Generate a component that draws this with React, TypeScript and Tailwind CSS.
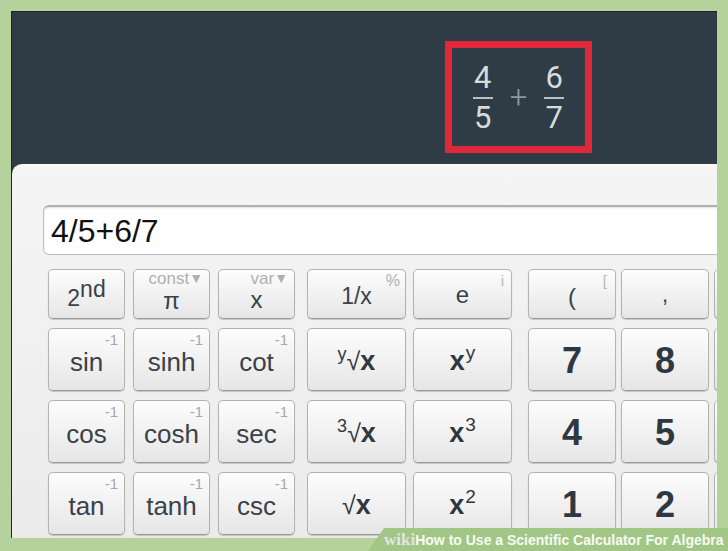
import React from "react";

const btnBase =
  "relative flex items-center justify-center rounded-[5px] border border-[#b3b3b3] border-b-[#9a9a9a] bg-gradient-to-b from-[#fdfdfd] to-[#e6e6e6] shadow-[0_1px_1px_rgba(0,0,0,0.18)] overflow-hidden";

function Sup({ children }: { children: React.ReactNode }) {
  return (
    <span className="absolute right-[6px] top-[3px] text-[15px] leading-[16px] text-[#a9a9a9]">
      {children}
    </span>
  );
}

function Fn({ label }: { label: string }) {
  return (
    <div className={btnBase}>
      <span className="text-[26px] leading-none text-[#3a4148] mt-[4px]">{label}</span>
      <Sup>-1</Sup>
    </div>
  );
}

function Digit({ d }: { d: string }) {
  return (
    <div className={btnBase}>
      <span className="text-[36px] font-bold leading-none text-[#2d3842] mt-[2px]">{d}</span>
    </div>
  );
}

function Blank() {
  return <div className={btnBase} />;
}

function Frac({ a, b }: { a: string; b: string }) {
  return (
    <div className="flex flex-col items-center">
      <span className="text-[31px] leading-[30px] text-[#d6dbde]">{a}</span>
      <span className="block w-[20px] h-[2px] bg-[#b9c0c5] my-[4px]" />
      <span className="text-[31px] leading-[30px] text-[#d6dbde]">{b}</span>
    </div>
  );
}

export default function App() {
  return (
    <div
      className="relative w-[728px] h-[551px] bg-[#b5d19c] pl-[11px] pr-[11px] pt-[11px] pb-[13px] overflow-hidden"
      style={{ fontFamily: '"Liberation Sans", Arial, sans-serif' }}
    >
      <div className="w-full h-full flex flex-col bg-[#2f3b45] border-t border-l border-[#1e272e] overflow-hidden">
        {/* dark top */}
        <div className="h-[152px] shrink-0 flex justify-end items-start pt-[29px] pr-[125px]">
          <div
            className="w-[147px] h-[112px] border-[7px] border-[#e0283a] flex items-center justify-center gap-[17px] pt-[2px]"
            style={{ fontFamily: 'Roboto, "Liberation Sans", sans-serif' }}
          >
            <Frac a="4" b="5" />
            <span className="text-[31px] font-light leading-none text-[#8e979d] mb-[2px]">+</span>
            <Frac a="6" b="7" />
          </div>
        </div>

        {/* light calculator panel */}
        <div className="flex-1 rounded-tl-[10px] bg-gradient-to-b from-[#f5f5f5] to-[#ebebeb] border-t border-[#fafafa] pt-[40px] pl-[31px] overflow-hidden">
          <div className="h-[50px] w-[700px] rounded-[6px] border border-[#bdbdbd] border-t-[2px] border-t-[#b0b0b0] bg-white shadow-[inset_0_1px_2px_rgba(0,0,0,0.12)] flex items-center pl-[7px]">
            <span className="text-[32px] leading-none text-[#111111]">4/5+6/7</span>
          </div>

          <div className="mt-[14px] ml-[5px] flex">
            {/* group 1 */}
            <div className="grid grid-cols-[77px_77px_77px] grid-rows-[50px_63px_63px_63px] gap-x-[8px] gap-y-[9px] shrink-0">
              <div className={btnBase}>
                <span className="text-[23px] leading-none text-[#3a4148] mt-[8px]">
                  2<span className="relative -top-[9px]">nd</span>
                </span>
              </div>
              <div className={btnBase}>
                <span className="text-[24px] leading-[20px] text-[#3a4148] mt-[14px]">π</span>
                <span className="absolute right-[6px] top-[1px] text-[17px] leading-[15px] text-[#b0b0b0]">
                  const<span className="text-[14px] relative -top-[1px]">▼</span>
                </span>
              </div>
              <div className={btnBase}>
                <span className="text-[24px] leading-[20px] text-[#3a4148] mt-[12px]">x</span>
                <span className="absolute right-[6px] top-[1px] text-[17px] leading-[15px] text-[#b0b0b0]">
                  var<span className="text-[14px] relative -top-[1px]">▼</span>
                </span>
              </div>

              <Fn label="sin" />
              <Fn label="sinh" />
              <Fn label="cot" />
              <Fn label="cos" />
              <Fn label="cosh" />
              <Fn label="sec" />
              <Fn label="tan" />
              <Fn label="tanh" />
              <Fn label="csc" />
            </div>

            {/* group 2 */}
            <div className="ml-[12px] grid grid-cols-[99px_99px] grid-rows-[50px_63px_63px_63px] gap-x-[7px] gap-y-[9px] shrink-0">
              <div className={btnBase}>
                <span className="text-[23px] leading-none text-[#3a4148] mt-[4px]">1/x</span>
                <span className="absolute right-[5px] top-[3px] text-[16px] leading-[16px] text-[#b0b0b0]">%</span>
              </div>
              <div className={btnBase}>
                <span className="text-[24px] leading-none text-[#3a4148] mt-[2px]">e</span>
                <span className="absolute right-[7px] top-[3px] text-[15px] leading-[16px] text-[#b8b8b8]">i</span>
              </div>

              <div className={btnBase}>
                <span className="flex items-baseline leading-none text-[#30383f] mt-[4px]">
                  <span className="text-[18px] relative -top-[10px]">y</span>
                  <span className="text-[25px]">√</span>
                  <span className="text-[27px] font-bold">x</span>
                </span>
              </div>
              <div className={btnBase}>
                <span className="flex items-baseline leading-none text-[#30383f] mt-[4px]">
                  <span className="text-[27px] font-bold">x</span>
                  <span className="text-[19px] relative -top-[11px] ml-[1px]">y</span>
                </span>
              </div>

              <div className={btnBase}>
                <span className="flex items-baseline leading-none text-[#30383f] mt-[4px]">
                  <span className="text-[18px] relative -top-[10px]">3</span>
                  <span className="text-[25px]">√</span>
                  <span className="text-[27px] font-bold">x</span>
                </span>
              </div>
              <div className={btnBase}>
                <span className="flex items-baseline leading-none text-[#30383f] mt-[4px]">
                  <span className="text-[27px] font-bold">x</span>
                  <span className="text-[19px] relative -top-[11px] ml-[1px]">3</span>
                </span>
              </div>

              <div className={btnBase}>
                <span className="flex items-baseline leading-none text-[#30383f] mt-[4px]">
                  <span className="text-[25px]">√</span>
                  <span className="text-[27px] font-bold">x</span>
                </span>
              </div>
              <div className={btnBase}>
                <span className="flex items-baseline leading-none text-[#30383f] mt-[4px]">
                  <span className="text-[27px] font-bold">x</span>
                  <span className="text-[19px] relative -top-[11px] ml-[1px]">2</span>
                </span>
              </div>
            </div>

            {/* group 3 */}
            <div className="ml-[16px] grid grid-cols-[88px_88px_88px] grid-rows-[50px_63px_63px_63px] gap-x-[5px] gap-y-[9px] shrink-0">
              <div className={btnBase}>
                <span className="text-[24px] leading-none text-[#3a4148] mt-[6px]">(</span>
                <span className="absolute right-[8px] top-[3px] text-[15px] leading-[16px] text-[#b8b8b8]">[</span>
              </div>
              <div className={btnBase}>
                <span className="text-[22px] leading-none text-[#3a4148] mt-[2px]">,</span>
              </div>
              <Blank />

              <Digit d="7" />
              <Digit d="8" />
              <Blank />
              <Digit d="4" />
              <Digit d="5" />
              <Blank />
              <Digit d="1" />
              <Digit d="2" />
              <Blank />
            </div>
          </div>
        </div>
      </div>

      {/* wikiHow banner */}
      <div
        className="absolute left-[368px] top-[528px] w-[360px] h-[23px] bg-[#a2c686] flex items-center pl-[16px]"
        style={{ clipPath: "polygon(16px 0, 100% 0, 100% 100%, 0 100%)" }}
      >
        <span
          className="text-[17px] font-bold text-[#e4e4e4] leading-none"
          style={{ fontFamily: '"Liberation Serif", serif' }}
        >
          wiki
        </span>
        <span className="text-[14px] font-bold text-[#f7fbf3] leading-none whitespace-nowrap">
          How to Use a Scientific Calculator For Algebra
        </span>
      </div>
    </div>
  );
}
